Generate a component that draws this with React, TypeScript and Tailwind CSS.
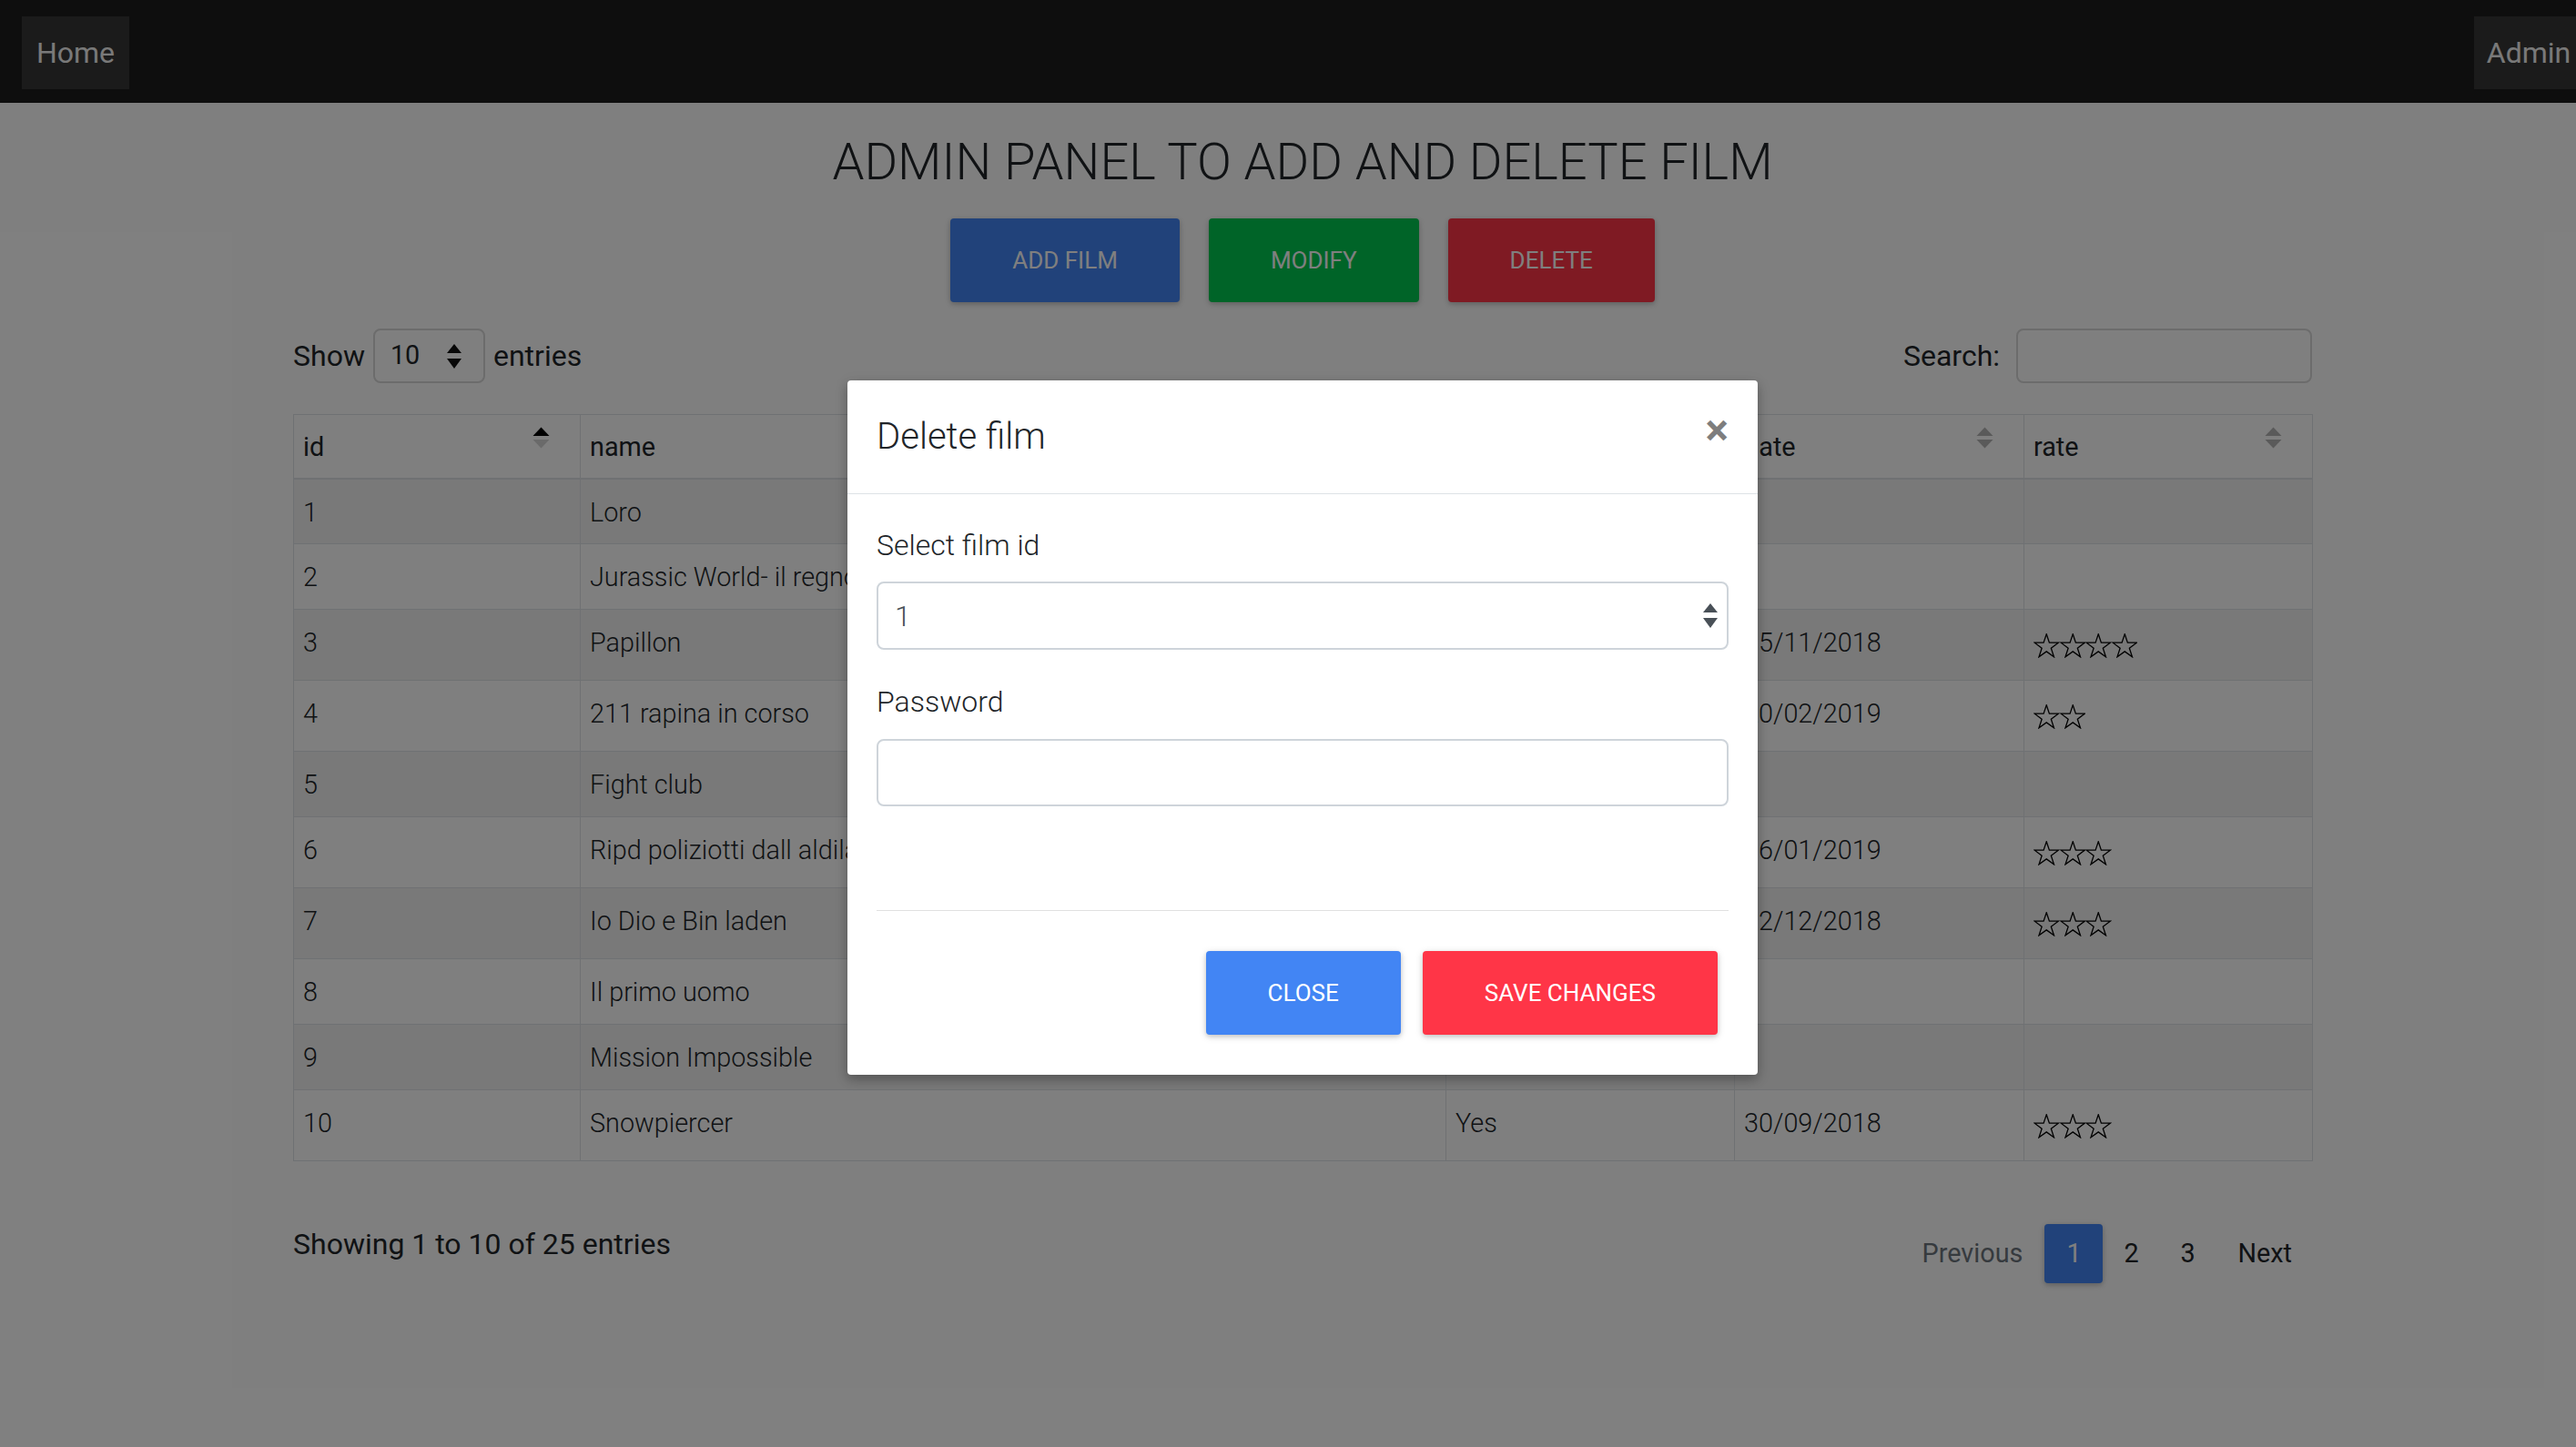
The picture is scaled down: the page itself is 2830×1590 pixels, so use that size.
import type { ReactNode } from 'react';

type Film = { id: number; name: string; avail: string; date: string; rate: number };

const FILMS: Film[] = [
  { id: 1, name: 'Loro', avail: '', date: '', rate: 0 },
  { id: 2, name: 'Jurassic World- il regno distrutto', avail: '', date: '', rate: 0 },
  { id: 3, name: 'Papillon', avail: 'Yes', date: '15/11/2018', rate: 4 },
  { id: 4, name: '211 rapina in corso', avail: 'Yes', date: '20/02/2019', rate: 2 },
  { id: 5, name: 'Fight club', avail: '', date: '', rate: 0 },
  { id: 6, name: 'Ripd poliziotti dall aldilà', avail: 'Yes', date: '16/01/2019', rate: 3 },
  { id: 7, name: 'Io Dio e Bin laden', avail: 'Yes', date: '12/12/2018', rate: 3 },
  { id: 8, name: 'Il primo uomo', avail: '', date: '', rate: 0 },
  { id: 9, name: 'Mission Impossible', avail: '', date: '', rate: 0 },
  { id: 10, name: 'Snowpiercer', avail: 'Yes', date: '30/09/2018', rate: 3 },
];

/** Triangles tri DataTables (asc = flèche haute active). */
function SortIcon({ asc = false }: { asc?: boolean }) {
  return (
    <svg width="19" height="24" viewBox="0 0 19 24" className="-mt-px shrink-0">
      <path d="M9.5 0.5 L18.5 10 H0.5 Z" fill={asc ? '#000000' : '#b4b4b4'} strokeLinejoin="round" />
      <path d="M0.5 14 H18.5 L9.5 23.5 Z" fill={asc ? '#d4d4d4' : '#b4b4b4'} strokeLinejoin="round" />
    </svg>
  );
}

function UpDown({ color }: { color: string }) {
  return (
    <svg width="16" height="27" viewBox="0 0 16 27">
      <path d="M8 0 L16 10 H0 Z" fill={color} />
      <path d="M0 16 H16 L8 27 Z" fill={color} />
    </svg>
  );
}

function Star() {
  return (
    <svg width="28.5" height="27" viewBox="0 0 28 27" className="shrink-0">
      <polygon
        points="14,0.8 17.14,10.17 27.1,10.17 19.09,16.15 22.23,25.8 14,19.85 5.77,25.8 8.91,16.15 0.9,10.17 10.86,10.17"
        fill="none"
        stroke="#000"
        strokeWidth="1.3"
        strokeLinejoin="miter"
      />
    </svg>
  );
}

function Th({ children, asc }: { children: ReactNode; asc?: boolean }) {
  return (
    <th className="h-[70px] border border-b-2 border-[#dee2e6] pl-[10px] pr-[33px] pt-[14px] text-left align-top text-[28.8px] font-normal leading-[43px]">
      <div className="flex items-start justify-between">
        <span>{children}</span>
        <SortIcon asc={asc} />
      </div>
    </th>
  );
}

function Td({ children }: { children?: ReactNode }) {
  return (
    <td className="border border-[#dee2e6] px-[10px] pt-[15px] align-top text-[28.8px] font-light leading-[43px] whitespace-nowrap overflow-hidden">
      {children}
    </td>
  );
}

function FilmTable() {
  return (
    <table className="w-[2218px] table-fixed border-collapse border border-[#dee2e6] text-[#212529]">
      <colgroup>
        <col className="w-[315px]" />
        <col className="w-[951px]" />
        <col className="w-[317px]" />
        <col className="w-[318px]" />
        <col className="w-[317px]" />
      </colgroup>
      <thead>
        <tr>
          <Th asc>id</Th>
          <Th>name</Th>
          <Th>available</Th>
          <Th>date</Th>
          <Th>rate</Th>
        </tr>
      </thead>
      <tbody>
        {FILMS.map((f, i) => (
          <tr
            key={f.id}
            className={(f.rate ? 'h-[78px] ' : 'h-[72px] ') + (i % 2 === 0 ? 'bg-[#f2f2f2]' : 'bg-white')}
          >
            <Td>{f.id}</Td>
            <Td>{f.name}</Td>
            <Td>{f.avail}</Td>
            <Td>{f.date}</Td>
            <Td>
              {f.rate > 0 && (
                <div className="flex pt-[11px]">
                  {Array.from({ length: f.rate }).map((_, k) => (
                    <Star key={k} />
                  ))}
                </div>
              )}
            </Td>
          </tr>
        ))}
      </tbody>
    </table>
  );
}

function DeleteModal() {
  return (
    <div className="w-[1000px] rounded-[4px] bg-white text-[#212529] shadow-[0_5px_11px_0_rgba(0,0,0,0.18),0_4px_15px_0_rgba(0,0,0,0.15)]">
      <div className="flex items-start justify-between border-b border-[#dee2e6] p-[32px]">
        <h4 className="text-[40px] font-light leading-[60px]">Delete film</h4>
        <button className="-mt-[7px] text-[48px] font-bold leading-[60px] text-black opacity-50">×</button>
      </div>
      <div className="px-[32px] pt-[32px]">
        <label className="mb-[16px] block text-[32px] font-light leading-[48px]">Select film id</label>
        <div className="mb-[33px] flex h-[75px] items-center justify-between rounded-[8px] border-2 border-[#ced4da] pl-[18px] pr-[10px] text-[32px] font-light text-[#495057]">
          <span>1</span>
          <UpDown color="#495057" />
        </div>
        <label className="mb-[17px] block text-[32px] font-light leading-[48px]">Password</label>
        <div className="h-[74px] rounded-[8px] border-2 border-[#ced4da]" />
        <div className="mt-[114px] h-px bg-[#e0e0e0]" />
        <div className="flex justify-end gap-[24px] pb-[44px] pr-[12px] pt-[44px]">
          <button className="h-[92px] rounded-[4px] bg-[#4285f4] px-[68px] text-[26px] uppercase text-white shadow-[0_2px_5px_0_rgba(0,0,0,0.16),0_2px_10px_0_rgba(0,0,0,0.12)]">
            Close
          </button>
          <button className="h-[92px] rounded-[4px] bg-[#ff3547] px-[68px] text-[26px] uppercase text-white shadow-[0_2px_5px_0_rgba(0,0,0,0.16),0_2px_10px_0_rgba(0,0,0,0.12)]">
            Save changes
          </button>
        </div>
      </div>
    </div>
  );
}

export default function App() {
  return (
    <div className="relative h-[1590px] w-full overflow-hidden bg-white font-[Roboto,'Liberation_Sans',sans-serif] text-[#212529]">
      <div className="w-[2862px]">
        <nav className="flex h-[113px] items-start justify-between bg-[#1c1c1c] px-[24px] pt-[18px]">
          <a className="flex h-[80px] w-[118px] items-center justify-center bg-[#363636] text-[32px] text-[#f2f2f2]">Home</a>
          <a className="flex h-[80px] w-[120px] items-center justify-center bg-[#363636] text-[32px] text-[#f2f2f2]">Admin</a>
        </nav>

        <main className="mx-auto w-[2218px]">
          <h3 className="mt-[32px] text-center text-[56px] font-light leading-[67px]">
            ADMIN PANEL TO ADD AND DELETE FILM
          </h3>

          <div className="mt-[28px] flex justify-center gap-[32px]">
            <button className="h-[92px] rounded-[4px] bg-[#4285f4] px-[68px] text-[26px] uppercase text-white shadow-[0_2px_5px_0_rgba(0,0,0,0.16),0_2px_10px_0_rgba(0,0,0,0.12)]">
              Add film
            </button>
            <button className="h-[92px] rounded-[4px] bg-[#00c851] px-[68px] text-[26px] uppercase text-white shadow-[0_2px_5px_0_rgba(0,0,0,0.16),0_2px_10px_0_rgba(0,0,0,0.12)]">
              Modify
            </button>
            <button className="h-[92px] rounded-[4px] bg-[#ff3547] px-[68px] text-[26px] uppercase text-white shadow-[0_2px_5px_0_rgba(0,0,0,0.16),0_2px_10px_0_rgba(0,0,0,0.12)]">
              Delete
            </button>
          </div>

          {/* Contrôles DataTables */}
          <div className="mt-[29px] flex h-[60px] items-center justify-between text-[32px]">
            <div className="flex items-center">
              <span>Show</span>
              <div className="mx-[9px] flex h-[60px] w-[123px] items-center justify-between rounded-[8px] border-2 border-[#d8d8d8] pl-[17px] pr-[24px] text-[28.8px]">
                <span>10</span>
                <UpDown color="#111" />
              </div>
              <span>entries</span>
            </div>
            <div className="flex items-center gap-[18px]">
              <span>Search:</span>
              <div className="h-[60px] w-[325px] rounded-[8px] border-2 border-[#d8d8d8]" />
            </div>
          </div>

          <div className="mt-[34px]">
            <FilmTable />
          </div>

          <div className="mt-[67px] flex items-start justify-between">
            <span className="text-[32px] leading-[48px]">Showing 1 to 10 of 25 entries</span>
            <div className="mt-[2px] flex h-[65px] items-center text-[28.8px]">
              <span className="px-[24px] text-[#6c757d]">Previous</span>
              <span className="flex h-[65px] w-[64px] items-center justify-center rounded-[4px] bg-[#4285f4] text-white shadow-[0_2px_5px_0_rgba(0,0,0,0.16),0_2px_10px_0_rgba(0,0,0,0.12)]">1</span>
              <span className="flex w-[62px] justify-center">2</span>
              <span className="flex w-[62px] justify-center">3</span>
              <span className="pl-[24px] pr-[22px]">Next</span>
            </div>
          </div>
        </main>
      </div>

      {/* Fond du modal */}
      <div className="absolute inset-0 bg-black/50" />
      <div className="absolute inset-y-0 left-0 flex w-[2862px] items-start justify-center pt-[418px]">
        <DeleteModal />
      </div>
    </div>
  );
}
